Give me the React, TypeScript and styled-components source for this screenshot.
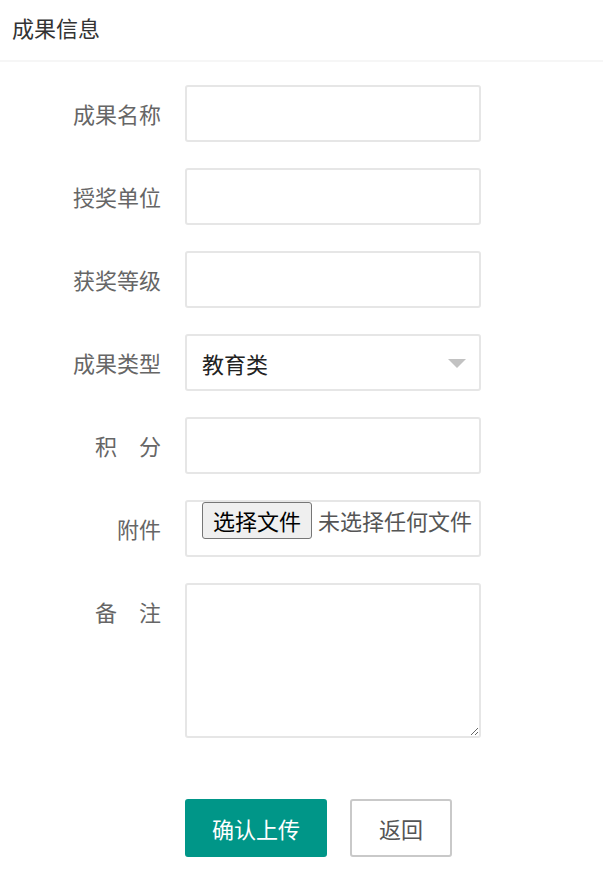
import React, { useState } from "react";
import styled, { createGlobalStyle } from "styled-components";

const GlobalStyle = createGlobalStyle`
  html, body { margin: 0; padding: 0; background: #fff; }
  body { font-family: "Noto Sans CJK SC", "Microsoft YaHei", sans-serif; }
  * { box-sizing: border-box; }
`;

const Page = styled.div`
  width: 603px;
  min-height: 886px;
  background: #fff;
`;

const Header = styled.div`
  height: 62px;
  padding: 0 12px 6px;
  display: flex;
  align-items: center;
  font-size: 22px;
  color: #333;
  border-bottom: 2px solid #f6f6f6;
`;

const Form = styled.form`
  display: flex;
  flex-direction: column;
  gap: 26px;
  padding-top: 23px;
`;

const Row = styled.div`
  display: grid;
  grid-template-columns: 161px 296px;
  column-gap: 24px;
  align-items: start;
`;

const Label = styled.label`
  height: 57px;
  line-height: 56px;
  text-align: right;
  font-size: 22px;
  color: #666;
  white-space: nowrap;
`;

const TextInput = styled.input`
  height: 57px;
  width: 100%;
  border: 2px solid #e6e6e6;
  border-radius: 3px;
  padding: 0 15px;
  font-size: 22px;
  font-family: inherit;
  color: #333;
  outline: none;
  background: #fff;
`;

const SelectBox = styled.div`
  position: relative;
  height: 57px;
  border: 2px solid #e6e6e6;
  border-radius: 3px;
  padding: 0 15px;
  display: flex;
  align-items: center;
  font-size: 22px;
  color: #222;
  background: #fff;
`;

const Arrow = styled.span`
  position: absolute;
  right: 13px;
  top: 50%;
  margin-top: -4px;
  width: 0;
  height: 0;
  border-left: 9px solid transparent;
  border-right: 9px solid transparent;
  border-top: 9px solid #c2c2c2;
`;

const FileBox = styled.label`
  height: 57px;
  border: 2px solid #e6e6e6;
  border-radius: 3px;
  padding-left: 15px;
  display: flex;
  align-items: flex-start;
  gap: 6px;
  background: #fff;
  overflow: hidden;
  white-space: nowrap;
  cursor: pointer;
`;

const HiddenFile = styled.input`
  display: none;
`;

const FileButton = styled.span`
  height: 37px;
  line-height: 35px;
  padding: 0 10px;
  border: 1px solid #767676;
  border-radius: 3px;
  background: #efefef;
  color: #000;
  font-size: 22px;
  flex-shrink: 0;
`;

const FileName = styled.span`
  line-height: 37px;
  font-size: 22px;
  color: #555;
`;

const TextArea = styled.textarea`
  height: 155px;
  width: 100%;
  border: 2px solid #e6e6e6;
  border-radius: 3px;
  padding: 10px 15px;
  font-size: 22px;
  font-family: inherit;
  color: #333;
  outline: none;
  resize: both;
  display: block;
`;

const ButtonRow = styled(Row)`
  margin-top: 35px;
`;

const ButtonGroup = styled.div`
  display: flex;
  gap: 23px;
`;

const Button = styled.button<{ $primary?: boolean }>`
  height: 58px;
  padding: 0 ${(p) => (p.$primary ? "25px" : "27px")};
  font-size: 22px;
  font-family: inherit;
  border-radius: 3px;
  cursor: pointer;
  white-space: nowrap;
  border: 2px solid ${(p) => (p.$primary ? "#009688" : "#c9c9c9")};
  background: ${(p) => (p.$primary ? "#009688" : "#fff")};
  color: ${(p) => (p.$primary ? "#fff" : "#555")};
`;

export default function App() {
  const [fileName, setFileName] = useState("未选择任何文件");
  return (
    <Page>
      <GlobalStyle />
      <Header>成果信息</Header>
      <Form onSubmit={(e) => e.preventDefault()}>
        <Row>
          <Label>成果名称</Label>
          <TextInput type="text" />
        </Row>
        <Row>
          <Label>授奖单位</Label>
          <TextInput type="text" />
        </Row>
        <Row>
          <Label>获奖等级</Label>
          <TextInput type="text" />
        </Row>
        <Row>
          <Label>成果类型</Label>
          <SelectBox>
            教育类
            <Arrow />
          </SelectBox>
        </Row>
        <Row>
          <Label>积　分</Label>
          <TextInput type="text" />
        </Row>
        <Row>
          <Label>附件</Label>
          <FileBox>
            <HiddenFile
              type="file"
              onChange={(e) => setFileName(e.target.files?.[0]?.name ?? "未选择任何文件")}
            />
            <FileButton>选择文件</FileButton>
            <FileName>{fileName}</FileName>
          </FileBox>
        </Row>
        <Row>
          <Label>备　注</Label>
          <TextArea />
        </Row>
        <ButtonRow>
          <span />
          <ButtonGroup>
            <Button $primary type="submit">确认上传</Button>
            <Button type="button">返回</Button>
          </ButtonGroup>
        </ButtonRow>
      </Form>
    </Page>
  );
}
